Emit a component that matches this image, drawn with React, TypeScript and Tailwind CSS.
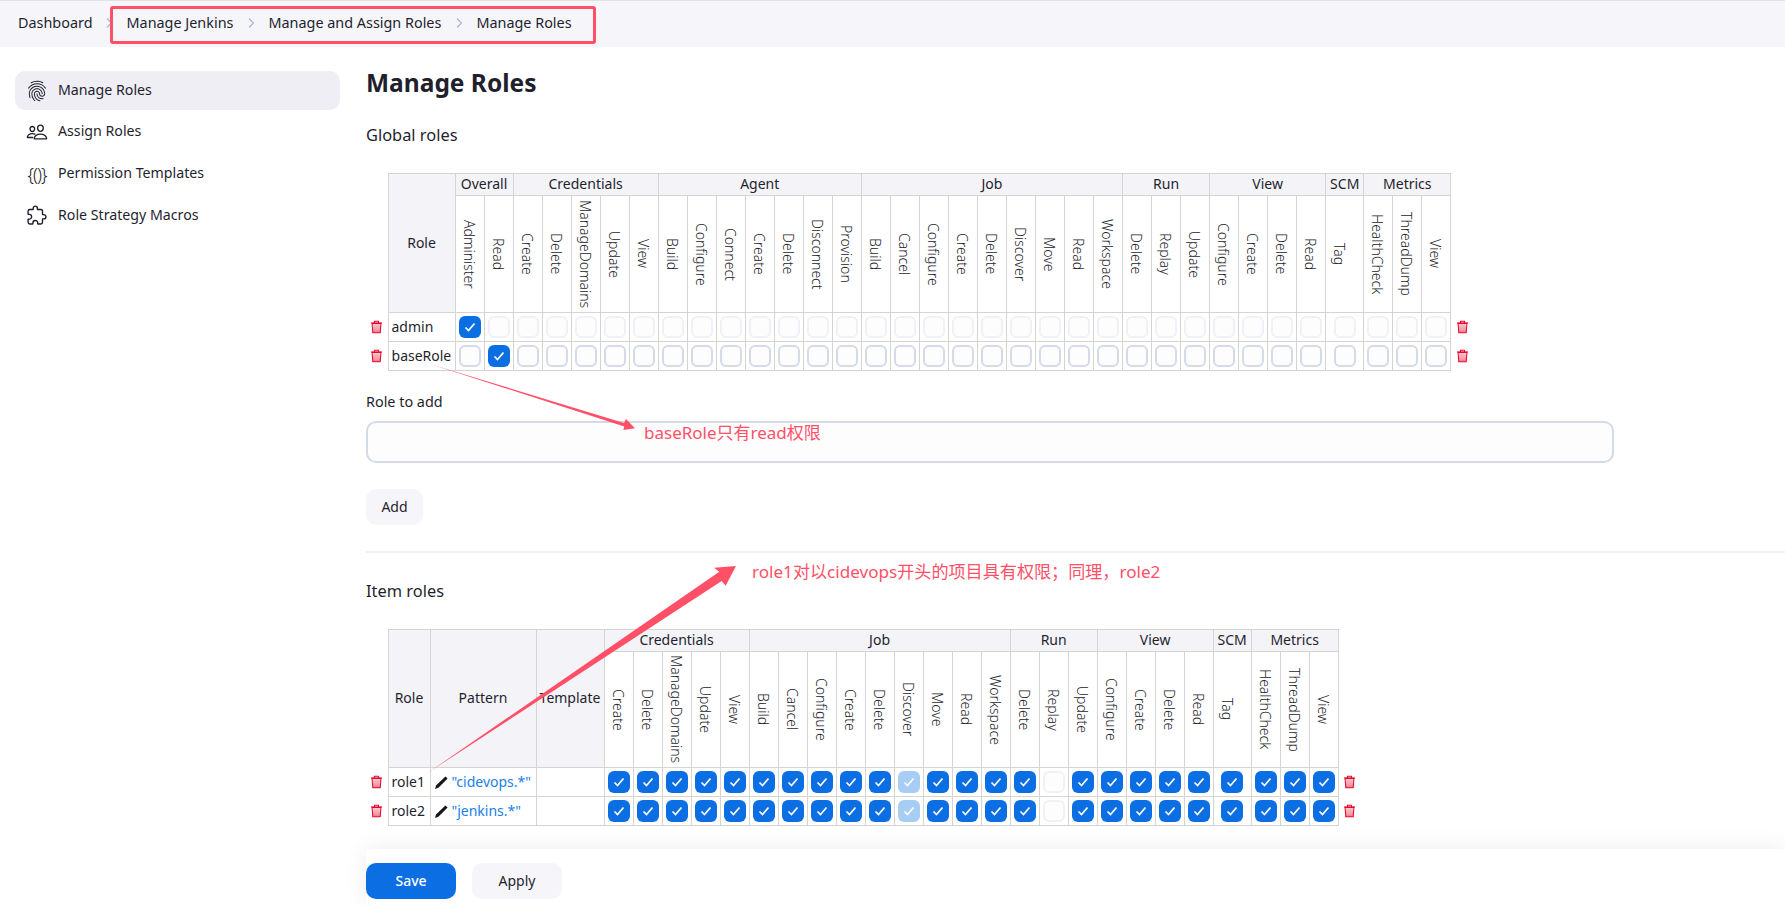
import React from 'react';
import { IoFingerPrintOutline, IoPeopleOutline, IoExtensionPuzzleOutline } from 'react-icons/io5';

type Group = { name: string; perms: string[]; wide?: boolean };

const overall: Group = { name: 'Overall', perms: ['Administer', 'Read'] };
const credentials: Group = { name: 'Credentials', perms: ['Create', 'Delete', 'ManageDomains', 'Update', 'View'] };
const agent: Group = { name: 'Agent', perms: ['Build', 'Configure', 'Connect', 'Create', 'Delete', 'Disconnect', 'Provision'] };
const rest: Group[] = [
  { name: 'Job', perms: ['Build', 'Cancel', 'Configure', 'Create', 'Delete', 'Discover', 'Move', 'Read', 'Workspace'] },
  { name: 'Run', perms: ['Delete', 'Replay', 'Update'] },
  { name: 'View', perms: ['Configure', 'Create', 'Delete', 'Read'] },
  { name: 'SCM', perms: ['Tag'], wide: true },
  { name: 'Metrics', perms: ['HealthCheck', 'ThreadDump', 'View'] },
];

const globalGroups = [overall, credentials, agent, ...rest];
const itemGroups = [credentials, ...rest];

const cell = 'border border-[#d4d4d0] p-0';
const headCell = `${cell} bg-[#f3f3f8] font-normal text-center`;

const Chevron = () => (
  <svg width="12" height="12" viewBox="0 0 12 12" fill="none" stroke="#a9b6d0" strokeWidth="1.2">
    <path d="M4 1.5 8.5 6 4 10.5" />
  </svg>
);

const Trash = () => (
  <svg width="13" height="14" viewBox="0 0 14 15" className="mx-auto block">
    <defs>
      <linearGradient id="trashFill" x1="0" y1="0" x2="0" y2="1">
        <stop offset="0" stopColor="#fdd5da" />
        <stop offset="1" stopColor="#f2778a" />
      </linearGradient>
    </defs>
    <path d="M2.2 3.6h9.6l-.8 10H3z" fill="url(#trashFill)" stroke="#e6092c" strokeWidth="1.1" />
    <path d="M1 3.2h12M4.8 3V1.2h4.4V3" fill="none" stroke="#e6092c" strokeWidth="1.1" />
    <path d="M5.2 5.5v6M7 5.5v6M8.8 5.5v6" stroke="#f8a9b5" strokeWidth="0.7" />
  </svg>
);

const Pencil = () => (
  <svg width="15" height="15" viewBox="0 0 15 15" className="shrink-0">
    <path d="M1 14 2 10.4 11.4 1.4 13.6 3.6 4.4 12.8z" fill="#14141f" />
  </svg>
);

type BoxState = 'on' | 'off' | 'off-disabled' | 'on-disabled';

const Box = ({ state }: { state: BoxState }) => {
  if (state === 'on' || state === 'on-disabled') {
    return (
      <div
        className={`mx-auto flex h-[22px] w-[22px] items-center justify-center rounded-[6px] ${
          state === 'on' ? 'bg-[#0b6fe3]' : 'bg-[#a8cdf5]'
        }`}
      >
        <svg width="12" height="12" viewBox="0 0 12 12" fill="none" stroke="#fff" strokeWidth="1.7">
          <path d="M1.5 6.5 4.5 9.5 10.5 2.5" />
        </svg>
      </div>
    );
  }
  return (
    <div
      className={`mx-auto h-[22px] w-[22px] rounded-[6px] border-2 bg-[#fdfdfe] ${
        state === 'off' ? 'border-[#d3dae8]' : 'border-[#f0f1f7]'
      }`}
    />
  );
};

const GroupHead = ({ groups }: { groups: Group[] }) => (
  <>
    {groups.map((g) => (
      <th key={g.name} colSpan={g.perms.length} className={`${headCell} h-[22px] pb-[2px] leading-none`}>
        {g.name}
      </th>
    ))}
  </>
);

const PermHead = ({ groups }: { groups: Group[] }) => (
  <>
    {groups.flatMap((g) =>
      g.perms.map((p) => (
        <th key={g.name + p} className={`${cell} bg-white font-light text-[#22222a]`}>
          <div className="flex items-center justify-center pl-[3px] [writing-mode:vertical-rl]">{p}</div>
        </th>
      )),
    )}
  </>
);

const Cols = ({ groups }: { groups: Group[] }) => (
  <>
    {groups.flatMap((g) =>
      g.perms.map((p) => <col key={g.name + p} className={g.wide ? 'w-[38px]' : 'w-[29px]'} />),
    )}
  </>
);

const Boxes = ({ groups, stateOf }: { groups: Group[]; stateOf: (g: string, p: string) => BoxState }) => (
  <>
    {groups.flatMap((g) =>
      g.perms.map((p) => (
        <td key={g.name + p} className={cell}>
          <Box state={stateOf(g.name, p)} />
        </td>
      )),
    )}
  </>
);

const GlobalTable = () => {
  const rows: { name: string; stateOf: (g: string, p: string) => BoxState }[] = [
    {
      name: 'admin',
      stateOf: (g, p) => (g === 'Overall' && p === 'Administer' ? 'on' : 'off-disabled'),
    },
    {
      name: 'baseRole',
      stateOf: (g, p) => (g === 'Overall' && p === 'Read' ? 'on' : 'off'),
    },
  ];
  return (
    <table className="mt-[26px] w-[1107px] table-fixed border-collapse">
      <colgroup>
        <col className="w-[22px]" />
        <col className="w-[67px]" />
        <Cols groups={globalGroups} />
        <col className="w-[22px]" />
      </colgroup>
      <thead>
        <tr className="h-[22px]">
          <th rowSpan={2} />
          <th rowSpan={2} className={`${headCell} pb-[2px]`}>
            Role
          </th>
          <GroupHead groups={globalGroups} />
          <th rowSpan={2} />
        </tr>
        <tr className="h-[117px]">
          <PermHead groups={globalGroups} />
        </tr>
      </thead>
      <tbody>
        {rows.map((r) => (
          <tr key={r.name} className="h-[29px]">
            <td>
              <Trash />
            </td>
            <td className={`${cell} pb-[2px] pl-[3px]`}>{r.name}</td>
            <Boxes groups={globalGroups} stateOf={r.stateOf} />
            <td>
              <Trash />
            </td>
          </tr>
        ))}
      </tbody>
    </table>
  );
};

const ItemTable = () => {
  const rows = [
    { name: 'role1', pattern: '"cidevops.*"' },
    { name: 'role2', pattern: '"jenkins.*"' },
  ];
  const stateOf = (g: string, p: string): BoxState => {
    if (p === 'Discover') return 'on-disabled';
    if (p === 'Replay') return 'off-disabled';
    return 'on';
  };
  return (
    <table className="mt-[26px] w-[994px] table-fixed border-collapse">
      <colgroup>
        <col className="w-[22px]" />
        <col className="w-[42px]" />
        <col className="w-[106px]" />
        <col className="w-[68px]" />
        <Cols groups={itemGroups} />
        <col className="w-[22px]" />
      </colgroup>
      <thead>
        <tr className="h-[22px]">
          <th rowSpan={2} />
          <th rowSpan={2} className={`${headCell} pb-[2px]`}>
            Role
          </th>
          <th rowSpan={2} className={`${headCell} pb-[2px]`}>
            Pattern
          </th>
          <th rowSpan={2} className={`${headCell} pb-[2px]`}>
            Template
          </th>
          <GroupHead groups={itemGroups} />
          <th rowSpan={2} />
        </tr>
        <tr className="h-[116px]">
          <PermHead groups={itemGroups} />
        </tr>
      </thead>
      <tbody>
        {rows.map((r) => (
          <tr key={r.name} className="h-[29px]">
            <td>
              <Trash />
            </td>
            <td className={`${cell} pb-[2px] pl-[3px]`}>{r.name}</td>
            <td className={`${cell} pl-[3px]`}>
              <div className="flex items-center gap-[3px]">
                <Pencil />
                <span className="whitespace-nowrap pb-[2px] text-[#1a7fe8]">{r.pattern}</span>
              </div>
            </td>
            <td className={cell} />
            <Boxes groups={itemGroups} stateOf={stateOf} />
            <td>
              <Trash />
            </td>
          </tr>
        ))}
      </tbody>
    </table>
  );
};

const NavItem = ({ icon, label, active }: { icon: React.ReactNode; label: string; active?: boolean }) => (
  <div className={`flex h-[39px] items-center gap-[10px] rounded-[10px] pl-[11px] ${active ? 'bg-[#eeeef4]' : ''}`}>
    <span className="flex w-[22px] justify-center text-[22px] text-[#1f1f2e]">{icon}</span>
    <span className="pb-[2px] text-[14.2px]">{label}</span>
  </div>
);

export default function App() {
  return (
    <div className="relative h-[905px] w-[1785px] overflow-hidden bg-white font-['Noto_Sans','Noto_Sans_CJK_SC',sans-serif] text-[14px] text-[#1f1f2e]">
      {/* breadcrumb */}
      <div className="relative flex h-[47px] items-center gap-[11.5px] border-t border-[#e2e2e2] bg-[#f6f6fa] pb-[3px] pl-[18px] text-[14.4px]">
        <span className="-mr-[1px]">Dashboard</span>
        <Chevron />
        <span>Manage Jenkins</span>
        <Chevron />
        <span>Manage and Assign Roles</span>
        <Chevron />
        <span>Manage Roles</span>
        <div className="absolute left-[110px] top-[5px] h-[38px] w-[486px] rounded-[3px] border-[3px] border-[#ff5068]" />
      </div>

      <div className="flex">
        <aside className="ml-[15px] mt-[24px] flex w-[325px] shrink-0 flex-col gap-[2.6px]">
          <NavItem active icon={<IoFingerPrintOutline />} label="Manage Roles" />
          <NavItem icon={<IoPeopleOutline />} label="Assign Roles" />
          <NavItem
            icon={<span className="text-[18px] font-light leading-none tracking-[-1px]">{'{()}'}</span>}
            label="Permission Templates"
          />
          <NavItem icon={<IoExtensionPuzzleOutline />} label="Role Strategy Macros" />
        </aside>

        <main className="ml-[26px] min-w-0 flex-1">
          <h1 className="mt-[18px] text-[24.5px] font-bold leading-[36px]">Manage Roles</h1>
          <h2 className="mt-[22px] text-[16.4px] leading-[24px]">Global roles</h2>
          <GlobalTable />

          <label className="mt-[21px] block text-[14.4px] leading-[20px]">Role to add</label>
          <div className="mt-[9px] h-[42px] w-[1248px] rounded-[10px] border-2 border-[#d3dae8] bg-[#fdfdfe]" />
          <button className="mt-[26px] block h-[36px] w-[57px] rounded-[10px] bg-[#f6f6fa] pb-[2px]">Add</button>
          <div className="mt-[26px] h-[2px] bg-[#f0f0f5]" />

          <h2 className="mt-[26px] text-[16.4px] leading-[24px]">Item roles</h2>
          <ItemTable />

          <div className="mt-[23px] flex h-[56px] gap-[16px] bg-white pt-[14px] shadow-[0_0_24px_rgba(0,0,0,0.08)]">
            <button className="h-[36px] w-[90px] rounded-[10px] bg-[#0b6fe3] pb-[2px] font-medium text-white">Save</button>
            <button className="h-[36px] w-[90px] rounded-[10px] bg-[#f6f6fa] pb-[2px]">Apply</button>
          </div>
        </main>
      </div>

      {/* screenshot annotations */}
      <svg className="pointer-events-none absolute left-0 top-0" width="1785" height="905" fill="#ff5068">
        <polygon points="430,364 624,423 626,419 635,428.3 623.3,430 624.3,426.5" />
        <polygon points="428,772.7 719.3,571.7 714,567.7 736,566 725.7,585.7 721.7,581" />
      </svg>
      <span className="absolute left-[644px] top-[421px] text-[17px] leading-[24px] text-[#ff5068]">baseRole只有read权限</span>
      <span className="absolute left-[752px] top-[560px] text-[17.1px] leading-[24px] text-[#ff5068]">
        role1对以cidevops开头的项目具有权限；同理，role2
      </span>
    </div>
  );
}
